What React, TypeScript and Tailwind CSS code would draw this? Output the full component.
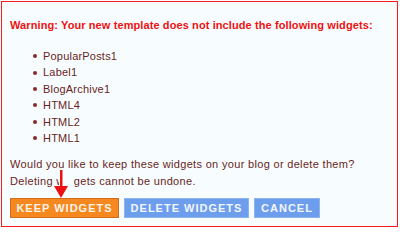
const widgets = ["PopularPosts1", "Label1", "BlogArchive1", "HTML4", "HTML2", "HTML1"];

export default function App() {
  return (
    <div className="w-[400px] h-[228px] bg-white pt-px pl-px" style={{ fontFamily: '"Liberation Sans", Arial, sans-serif' }}>
      <div className="relative w-[397px] h-[226px] border border-[#ff1a1a] bg-[#f7fdff] px-[8px] pt-[16px]">
        <p className="text-[11px] leading-[14px] font-bold tracking-[0.1px] text-[#ee1111]">
          Warning: Your new template does not include the following widgets:
        </p>

        <ul className="mt-[16px] ml-[23px] flex flex-col">
          {widgets.map((w) => (
            <li key={w} className="flex items-center gap-[6px] h-[16.4px] text-[11px] tracking-[0.2px] text-[#6a1e22]">
              <span className="w-[4px] h-[4px] rounded-full bg-[#8a2a2a]" />
              {w}
            </li>
          ))}
        </ul>

        <div className="mt-[10px] text-[11px] leading-[17px] tracking-[0.32px] text-[#6a1e22]">
          <p>Would you like to keep these widgets on your blog or delete them?</p>
          <p>Deleting widgets cannot be undone.</p>
        </div>

        <div className="mt-[8px] flex gap-[5px]">
          <button className="h-[20px] w-[109px] bg-[#f5891f] border border-[#d46a1c] text-[#fdf3ea] text-[11px] font-bold tracking-[1px]">
            KEEP WIDGETS
          </button>
          <button className="h-[20px] w-[125px] bg-[#6d9ded] border border-[#8fb4f0] text-[#f3f7ff] text-[11px] font-bold tracking-[1px]">
            DELETE WIDGETS
          </button>
          <button className="h-[20px] w-[66px] bg-[#6d9ded] border border-[#8fb4f0] text-[#f3f7ff] text-[11px] font-bold tracking-[1px]">
            CANCEL
          </button>
        </div>

        {/* arrow pointing at keep button */}
        <div className="absolute left-[48px] top-[168px] w-[21px] h-[28px] flex flex-col items-center">
          <div className="absolute left-[9px] top-[7px] w-[14px] h-[14px] bg-[#f7fdff]" />
          <svg width="14" height="28" viewBox="0 0 14 28" className="relative">
            <rect x="6" y="0" width="2.5" height="17" fill="#ee1111" />
            <polygon points="0,16 14,16 7,28" fill="#ee1111" />
          </svg>
        </div>
      </div>
    </div>
  );
}
